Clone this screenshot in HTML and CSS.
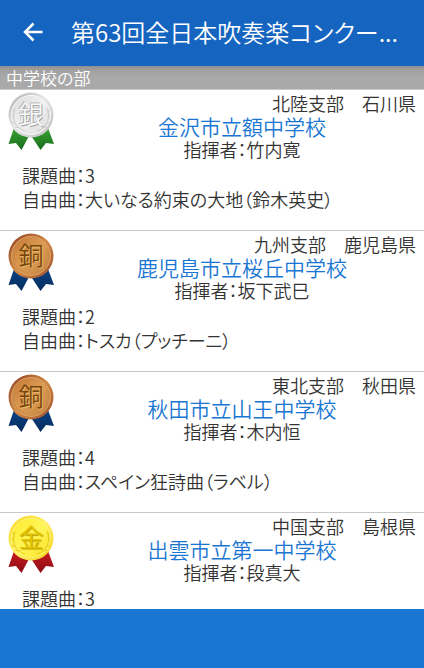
FILE: index.html
```html
<!DOCTYPE html>
<html lang="ja">
<head>
<meta charset="utf-8">
<meta name="viewport" content="width=device-width, initial-scale=1">
<title>第63回全日本吹奏楽コンクール</title>
<link rel="stylesheet" href="styles.css">
</head>
<body>
<svg class="defs" width="0" height="0" aria-hidden="true">
  <defs>
    <linearGradient id="silver" x1="0" y1="0" x2="1" y2="1"><stop offset="0" stop-color="#acacac"/><stop offset=".45" stop-color="#e6e6e6"/><stop offset="1" stop-color="#bdbdbd"/></linearGradient>
    <linearGradient id="silver-face" x1="0" y1="0" x2="1" y2="1"><stop offset="0" stop-color="#dadada"/><stop offset=".5" stop-color="#f0f0f0"/><stop offset="1" stop-color="#dadada"/></linearGradient>
    <linearGradient id="bronze" x1="0" y1="0" x2="1" y2="1"><stop offset="0" stop-color="#8c3d22"/><stop offset=".5" stop-color="#d08a44"/><stop offset="1" stop-color="#9a4c2c"/></linearGradient>
    <linearGradient id="bronze-face" x1="0" y1="0" x2="1" y2="1"><stop offset="0" stop-color="#c27535"/><stop offset=".5" stop-color="#dc9c54"/><stop offset="1" stop-color="#c4813f"/></linearGradient>
    <linearGradient id="gold" x1="0" y1="0" x2="1" y2="1"><stop offset="0" stop-color="#f5d81c"/><stop offset=".5" stop-color="#fff06a"/><stop offset="1" stop-color="#f2d014"/></linearGradient>
    <linearGradient id="gold-face" x1="0" y1="0" x2="1" y2="1"><stop offset="0" stop-color="#ffea29"/><stop offset=".5" stop-color="#fff55a"/><stop offset="1" stop-color="#fce122"/></linearGradient>
    <linearGradient id="green" x1="0" y1="0" x2="0" y2="1"><stop offset="0" stop-color="#3aa334"/><stop offset="1" stop-color="#176b1b"/></linearGradient>
    <linearGradient id="navy" x1="0" y1="0" x2="0" y2="1"><stop offset="0" stop-color="#084286"/><stop offset="1" stop-color="#062c5c"/></linearGradient>
    <linearGradient id="red" x1="0" y1="0" x2="0" y2="1"><stop offset="0" stop-color="#c71a20"/><stop offset="1" stop-color="#8c0d14"/></linearGradient>
    <path id="ribbon" d="M14 38 8.500 54 16 53 21.500 60 30 44 40.500 60 46 53 54 54 48 38 31 42Z"/>
    <path id="laurel" d="M25 41C15 38 11 29 15 18M37 41C47 38 51 29 47 18M20 38l-5-1M16 34l-4-2M14 29l-2-4M14 24l-1-5M42 38l5-1M46 34l4-2M48 29l2-4M48 24l1-5"/>
  </defs>
</svg>

<header class="bar">
  <button class="back" type="button" aria-label="戻る">
    <svg width="20" height="20" viewBox="0 0 20 20" aria-hidden="true"><path d="M19.500 10H2.500M10.500 1.500 2 10l8.500 8.500"/></svg>
  </button>
  <h1 class="title">第63回全日本吹奏楽コンクー...</h1>
</header>

<main class="results">
  <h2 class="section">中学校の部</h2>
  <ul class="list">
    <li class="entry">
      <svg class="medal silver" viewBox="0 0 60 64" role="img" aria-label="銀賞">
        <use href="#ribbon" fill="url(#green)"/>
        <circle cx="31" cy="25" r="22.500" fill="url(#silver)"/><circle cx="31" cy="25" r="19.500" fill="url(#silver-face)" stroke="#f8f8f8"/>
        <use href="#laurel" class="laurel"/>
        <text x="31" y="34">銀</text>
      </svg>
      <div class="info">
        <p class="area">北陸支部　石川県</p>
        <p class="school"><a href="#kanazawa">金沢市立額中学校</a></p>
        <p class="conductor">指揮者：竹内寛</p>
      </div>
      <div class="pieces"><p>課題曲：3</p><p>自由曲：大いなる約束の大地（鈴木英史）</p></div>
    </li>
    <li class="entry">
      <svg class="medal bronze" viewBox="0 0 60 64" role="img" aria-label="銅賞">
        <use href="#ribbon" fill="url(#navy)"/>
        <circle cx="31" cy="25" r="22.500" fill="url(#bronze)"/><circle cx="31" cy="25" r="19.500" fill="url(#bronze-face)" stroke="#dda065"/>
        <use href="#laurel" class="laurel"/>
        <text x="31" y="34">銅</text>
      </svg>
      <div class="info">
        <p class="area">九州支部　鹿児島県</p>
        <p class="school"><a href="#kagoshima">鹿児島市立桜丘中学校</a></p>
        <p class="conductor">指揮者：坂下武巳</p>
      </div>
      <div class="pieces"><p>課題曲：2</p><p>自由曲：トスカ（プッチーニ）</p></div>
    </li>
    <li class="entry">
      <svg class="medal bronze" viewBox="0 0 60 64" role="img" aria-label="銅賞">
        <use href="#ribbon" fill="url(#navy)"/>
        <circle cx="31" cy="25" r="22.500" fill="url(#bronze)"/><circle cx="31" cy="25" r="19.500" fill="url(#bronze-face)" stroke="#dda065"/>
        <use href="#laurel" class="laurel"/>
        <text x="31" y="34">銅</text>
      </svg>
      <div class="info">
        <p class="area">東北支部　秋田県</p>
        <p class="school"><a href="#akita">秋田市立山王中学校</a></p>
        <p class="conductor">指揮者：木内恒</p>
      </div>
      <div class="pieces"><p>課題曲：4</p><p>自由曲：スペイン狂詩曲（ラベル）</p></div>
    </li>
    <li class="entry">
      <svg class="medal gold" viewBox="0 0 60 64" role="img" aria-label="金賞">
        <use href="#ribbon" fill="url(#red)"/>
        <circle cx="31" cy="25" r="22.500" fill="url(#gold)"/><circle cx="31" cy="25" r="19.500" fill="url(#gold-face)" stroke="#fff27a"/>
        <use href="#laurel" class="laurel"/>
        <text x="31" y="34">金</text>
      </svg>
      <div class="info">
        <p class="area">中国支部　島根県</p>
        <p class="school"><a href="#izumo">出雲市立第一中学校</a></p>
        <p class="conductor">指揮者：段真大</p>
      </div>
      <div class="pieces"><p>課題曲：3</p></div>
    </li>
  </ul>
</main>
<footer class="banner"></footer>
</body>
</html>
```
FILE: styles.css
```css
* { box-sizing: border-box; }
body {
  margin: 0;
  height: 100vh;
  display: flex;
  flex-direction: column;
  overflow: hidden;
  background: #fff;
  color: #333;
  font: 350 18px/24px "Noto Sans CJK JP", sans-serif;
  font-feature-settings: "palt";
}
h1, h2, p, ul { margin: 0; padding: 0; font-weight: inherit; }
.defs { position: absolute; }

.bar {
  flex: none;
  display: flex;
  align-items: center;
  gap: 28px;
  height: 66px;
  padding: 0 16px 2px 23px;
  background: #1565c0;
  color: #fff;
}
.back { display: flex; padding: 0; border: 0; background: none; color: inherit; cursor: pointer; }
.back path { fill: none; stroke: currentColor; stroke-width: 2.5; }
.title { font-size: 24px; line-height: 32px; white-space: nowrap; }

.results { flex: 1; min-height: 0; overflow: hidden; }
.section {
  height: 24px;
  padding: 0 6px;
  background: linear-gradient(#909090, #a0a0a0 4px, #a9a9a9 12px);
  border-bottom: 1px solid #c8c8c8;
  color: #fff;
  font-size: 17px;
}
.list { list-style: none; }
.entry {
  display: grid;
  grid-template-columns: 60px 1fr;
  border-bottom: 1px solid #c8c8c8;
}
.entry:last-child { border-bottom: 0; }
.info { padding-top: 1px; text-align: center; }
.area { padding-right: 8px; text-align: right; font-feature-settings: normal; }
.school { font-size: 21px; line-height: 22px; }
.school a { color: #1976d2; text-decoration: none; }
.pieces { grid-column: 1 / -1; padding: 2px 22px 19px; }

.medal { width: 60px; height: 64px; }
.medal text { font-size: 25px; text-anchor: middle; }
.laurel { fill: none; stroke-width: 1; }
.silver text { fill: #fafafa; text-shadow: 1px 1px 0 #a4a4a4, -1px -1px 0 #b8b8b8; }
.silver .laurel { stroke: #cecece; }
.bronze text { fill: #754508; text-shadow: 1px 1px 0 #eab46a; }
.bronze .laurel { stroke: #c98a48; }
.gold text { fill: #e2c400; text-shadow: 1px 1px 1px #b89a00; }
.gold .laurel { stroke: #e8cc20; }

.banner { flex: none; height: 59px; background: #1976d2; }
```
